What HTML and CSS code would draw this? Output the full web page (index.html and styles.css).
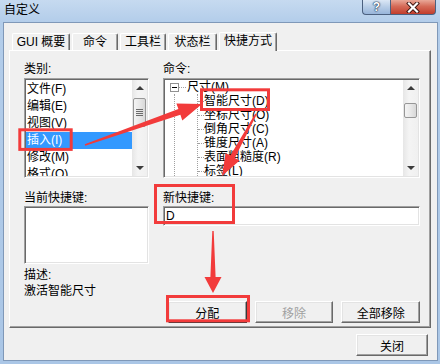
FILE: index.html
```html
<!DOCTYPE html>
<html lang="zh">
<head>
    <meta charset="UTF-8">
    <title>自定义</title>
    <link rel="stylesheet" href="styles.css">
</head>
<body>
<div class="window">
    <div class="titlebar">
        <span class="title">自定义</span>
        <div class="caption-btns">
            <span class="cap help">?</span>
            <span class="cap close">
                <svg width="14" height="11" viewBox="0 0 14 11">
                    <path d="M3 1.5 L11 9.5 M11 1.5 L3 9.5" stroke="#3a1410" stroke-width="4" stroke-linecap="square"/>
                    <path d="M3 1.5 L11 9.5 M11 1.5 L3 9.5" stroke="#fff" stroke-width="2.2" stroke-linecap="square"/>
                </svg>
            </span>
        </div>
    </div>

    <div class="client">
        <div class="tabs">
            <div class="tab w58">GUI 概要</div>
            <div class="tab w46">命令</div>
            <div class="tab w46">工具栏</div>
            <div class="tab w49">状态栏</div>
            <div class="tab w58 active">快捷方式</div>
        </div>

        <div class="panel">
            <!-- categories -->
            <div class="col">
                <div class="label">类别:</div>
                <div class="listbox sunken cat-list">
                    <div class="items">
                        <div class="item">文件(F)</div>
                        <div class="item">编辑(E)</div>
                        <div class="item">视图(V)</div>
                        <div class="item selected">插入(I)</div>
                        <div class="item">修改(M)</div>
                        <div class="item">格式(O)</div>
                    </div>
                    <div class="vscroll">
                        <div class="sb-btn"><span class="arrow-up"></span></div>
                        <div class="thumb grip"><span></span><span></span><span></span><span></span></div>
                        <div class="sb-fill"></div>
                        <div class="sb-btn"><span class="arrow-down"></span></div>
                    </div>
                </div>
            </div>

            <!-- commands -->
            <div class="col">
                <div class="label">命令:</div>
                <div class="listbox sunken tree">
                    <div class="tree-items">
                        <div class="trow root">
                            <span class="expander"></span>
                            <span class="hdots"></span>
                            <span>尺寸(M)</span>
                        </div>
                        <div class="branch">
                            <div class="sub">
                                <div class="trow"><span class="stub"></span><span>智能尺寸(D)</span></div>
                                <div class="trow"><span class="stub"></span><span>坐标尺寸(O)</span></div>
                                <div class="trow"><span class="stub"></span><span>倒角尺寸(C)</span></div>
                                <div class="trow"><span class="stub"></span><span>锥度尺寸(A)</span></div>
                                <div class="trow"><span class="stub"></span><span>表面粗糙度(R)</span></div>
                                <div class="trow"><span class="stub"></span><span>标签(L)</span></div>
                            </div>
                        </div>
                    </div>
                    <div class="vscroll">
                        <div class="sb-btn"><span class="arrow-up"></span></div>
                        <div class="thumb small"></div>
                        <div class="sb-fill"></div>
                        <div class="sb-btn"><span class="arrow-down"></span></div>
                    </div>
                </div>
            </div>

            <!-- current key / description -->
            <div class="col">
                <div class="label small">当前快捷键:</div>
                <div class="sunken keys-box"></div>
                <div class="label small desc">描述:</div>
                <div class="label small">激活智能尺寸</div>
            </div>

            <!-- new key + buttons -->
            <div class="col">
                <div class="label small">新快捷键:</div>
                <div class="sunken key-input">D</div>
                <div class="btn-row">
                    <div class="btn default">分配</div>
                    <div class="btn disabled">移除</div>
                    <div class="btn">全部移除</div>
                </div>
            </div>
        </div>

        <div class="footer">
            <div class="btn close-btn">关闭</div>
        </div>
    </div>

    <!-- red annotations -->
    <svg class="annot" width="440" height="364" viewBox="0 0 440 364">
        <g fill="none" stroke="#f23b3b" stroke-width="3">
            <rect x="19.8" y="129.8" width="51.4" height="19.6"/>
            <rect x="201.5" y="89.8" width="67" height="19.7"/>
            <rect x="155.5" y="185.5" width="78" height="37"/>
            <rect x="167.5" y="296.5" width="81" height="24.3"/>
        </g>
        <g fill="#f23b3b">
            <polygon points="85.3,145.8 180.4,114.8 182.3,120.4 202,104 176.4,103.4 178.4,109.1 84.7,144.2"/>
            <polygon points="256.7,114.4 234.8,157.9 239.6,160.6 222,176 225.6,152.9 230.4,155.5 255.3,113.6"/>
            <polygon points="212.3,231 213.7,231 215.6,277 221.5,277 213,293 204.5,277 210.4,277"/>
        </g>
    </svg>
</div>
</body>
</html>
```

FILE: styles.css
```css
* {
    box-sizing: border-box;
}
html, body {
    margin: 0;
    padding: 0;
}
body {
    width: 440px;
    height: 364px;
    overflow: hidden;
    font-family: "Liberation Sans", "Noto Sans CJK SC", sans-serif;
    font-size: 12px;
    color: #000;
}
.window {
    position: relative;
    width: 440px;
    height: 364px;
    background: linear-gradient(#c6daf0, #b3cdea 22px, #aac6e6);
    display: flex;
    flex-direction: column;
}

/* title bar */
.titlebar {
    height: 22px;
    display: flex;
    align-items: flex-start;
}
.title {
    padding: 3px 0 0 4px;
    line-height: 14px;
}
.caption-btns {
    margin-left: auto;
    margin-right: 4px;
    display: flex;
}
.cap {
    height: 15px;
    display: flex;
    align-items: center;
    justify-content: center;
    border: 1px solid #4b607f;
    border-top: none;
}
.cap.help {
    width: 28px;
    border-right: none;
    border-radius: 0 0 0 4px;
    background: linear-gradient(#dbe7f5, #b6cce6 50%, #98b5da);
    color: #fff;
    font-weight: bold;
    font-size: 12px;
    text-shadow: 0 0 1px #1e3554, 0 0 1px #1e3554, 0 0 2px #1e3554;
}
.cap.close {
    width: 46px;
    border-radius: 0 0 4px 0;
    background: linear-gradient(#e9a898, #d56b58 45%, #c23d2c);
}

/* client area */
.client {
    flex: 1;
    margin: 0 2px 3px 3px;
    border: 1px solid #7f98b8;
    background: #f0f0f0;
    padding: 10px 6px 0 5px;
}
.tabs {
    display: flex;
    gap: 2px;
    height: 17px;
    margin-left: 3px;
}
.tab {
    height: 17px;
    border: 1px solid;
    border-color: #fff #696969 transparent #fff;
    border-bottom: none;
    border-radius: 2px 2px 0 0;
    box-shadow: inset -1px 0 #a0a0a0;
    text-align: center;
    line-height: 16px;
    background: #f0f0f0;
}
.tab.active {
    position: relative;
    z-index: 1;
    margin-top: -1px;
    height: 19px;
}
.w58 { width: 58px; }
.w46 { width: 46px; }
.w49 { width: 49px; }

.panel {
    height: 278px;
    border: 1px solid;
    border-color: #fff #696969 #696969 #fff;
    box-shadow: inset -1px -1px #a0a0a0;
    padding: 10px 0 0 14px;
    display: grid;
    grid-template-columns: 125px 257px;
    grid-template-rows: auto auto;
    column-gap: 14px;
    row-gap: 8px;
    align-items: start;
}
.col {
    display: flex;
    flex-direction: column;
}
.label {
    line-height: 17px;
    white-space: nowrap;
}
.label.small {
    line-height: 16px;
}
.label.desc {
    margin-top: 3px;
}

.sunken {
    background: #fff;
    border: 1px solid;
    border-color: #a0a0a0 #fff #fff #a0a0a0;
    box-shadow: inset 1px 1px #696969, inset -1px -1px #e3e3e3;
    padding: 1px;
}

/* list boxes */
.listbox {
    height: 100px;
    display: flex;
    overflow: hidden;
}
.items {
    flex: 1;
    padding-top: 1px;
    overflow: hidden;
}
.item {
    height: 17px;
    line-height: 17px;
    padding-left: 1px;
    white-space: nowrap;
}
.item.selected {
    background: #3399ff;
    color: #fff;
}

/* scrollbar */
.vscroll {
    width: 15px;
    display: flex;
    flex-direction: column;
    background: linear-gradient(90deg, #e6e6e6, #f4f4f4 40%, #f0f0f0);
}
.sb-btn {
    height: 16px;
    display: flex;
    align-items: center;
    justify-content: center;
}
.arrow-up, .arrow-down {
    width: 0;
    height: 0;
    border-left: 4px solid transparent;
    border-right: 4px solid transparent;
}
.arrow-up {
    border-bottom: 4px solid #3c3c3c;
}
.arrow-down {
    border-top: 4px solid #3c3c3c;
}
.sb-fill {
    flex: 1;
}
.thumb {
    margin: 2px 1px 0 1px;
    border: 1px solid #979797;
    border-radius: 2px;
    background: linear-gradient(90deg, #f4f4f4, #e8e8e8 50%, #d8d8d8);
}
.thumb.grip {
    height: 29px;
    display: flex;
    flex-direction: column;
    align-items: center;
    justify-content: center;
    gap: 1px;
}
.thumb.grip span {
    width: 7px;
    height: 1px;
    background: #6b6b6b;
}
.thumb.small {
    height: 15px;
    margin-top: 7px;
}

/* tree */
.tree-items {
    flex: 1;
    overflow: hidden;
}
.trow {
    height: 14px;
    display: flex;
    align-items: center;
    white-space: nowrap;
    line-height: 14px;
}
.trow.root {
    padding-left: 5px;
}
.expander {
    position: relative;
    width: 9px;
    height: 9px;
    border: 1px solid #919191;
    background: #fff;
}
.expander::after {
    content: "";
    position: absolute;
    left: 1px;
    top: 3px;
    width: 5px;
    height: 1px;
    background: #000;
}
.hdots {
    width: 7px;
    margin-right: 1px;
    border-top: 1px dotted #a0a0a0;
}
.branch {
    margin-left: 9px;
    border-left: 1px dotted #a0a0a0;
}
.sub {
    margin-left: 22px;
    border-left: 1px dotted #a0a0a0;
}
.stub {
    width: 6px;
    border-top: 1px dotted #a0a0a0;
}

/* lower area */
.keys-box {
    height: 58px;
}
.key-input {
    height: 20px;
    padding: 1px 2px;
    line-height: 16px;
}
.btn-row {
    display: flex;
    gap: 8px;
    margin: 75px 0 0 5px;
}
.btn {
    width: 80px;
    height: 22px;
    display: flex;
    align-items: center;
    justify-content: center;
    background: #f0f0f0;
    border: 1px solid;
    border-color: #fff #696969 #696969 #fff;
    box-shadow: inset -1px -1px #a0a0a0, inset 1px 1px #e3e3e3;
}
.btn.default {
    border-color: #fff #3a3a3a #3a3a3a #fff;
}
.btn.disabled {
    color: #a0a0a0;
}
.footer {
    display: flex;
    justify-content: flex-end;
    padding: 6px 3px 0 0;
}
.btn.close-btn {
    width: 72px;
}

/* annotation overlay */
.annot {
    position: absolute;
    left: 0;
    top: 0;
    pointer-events: none;
}
```
